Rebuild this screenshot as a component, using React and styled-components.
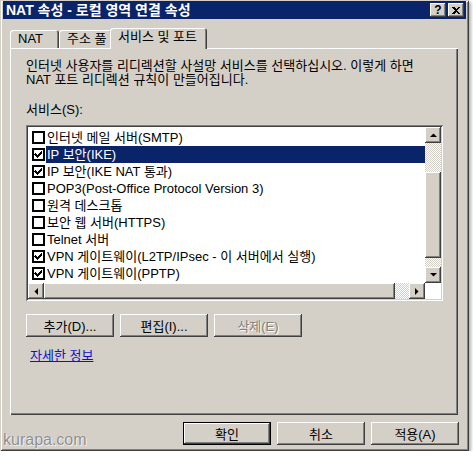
import React from 'react';
import styled, { createGlobalStyle } from 'styled-components';

const FACE = '#d4d0c8';
const NAVY = '#0a246a';

const GlobalStyle = createGlobalStyle`
  html, body {
    margin: 0;
    padding: 0;
    background: #fff;
  }
  body {
    font-family: "Liberation Sans", "Noto Sans CJK KR", sans-serif;
    font-size: 13px;
    color: #000;
  }
`;

const raised = `
  box-shadow: inset -1px -1px #404040, inset 1px 1px #fff,
    inset -2px -2px #808080, inset 2px 2px ${FACE};
`;

const Window = styled.div`
  position: relative;
  box-sizing: border-box;
  width: 469px;
  height: 451px;
  padding: 1px 3px 3px 3px;
  background: ${FACE};
  display: flex;
  flex-direction: column;
  box-shadow: inset 1px 1px ${FACE}, inset -1px -1px #404040,
    inset 2px 2px #fff, inset -2px -2px #808080,
    2px 2px 3px rgba(0, 0, 0, 0.3);
`;

const TitleBar = styled.div`
  height: 18px;
  background: ${NAVY};
  display: flex;
  align-items: center;
  padding: 0 2px 0 3px;
`;

const Title = styled.span`
  flex: 1;
  color: #fff;
  font-weight: bold;
  font-size: 14px;
  line-height: 18px;
  white-space: nowrap;
`;

const TitleButton = styled.div`
  width: 16px;
  height: 14px;
  margin-left: 2px;
  background: ${FACE};
  ${raised}
  display: flex;
  align-items: center;
  justify-content: center;
  font-weight: bold;
  font-size: 12px;
  line-height: 14px;
`;

const Client = styled.div`
  flex: 1;
  display: flex;
  flex-direction: column;
  padding: 9px 7px 0 7px;
`;

const TabStrip = styled.div`
  display: flex;
  align-items: flex-end;
  height: 20px;
`;

const Tab = styled.div`
  position: relative;
  box-sizing: border-box;
  width: ${({ $w }) => $w}px;
  height: ${({ $active }) => ($active ? 21 : 18)}px;
  margin-left: ${({ $active }) => ($active ? -2 : 0)}px;
  margin-bottom: ${({ $active }) => ($active ? -1 : 0)}px;
  z-index: ${({ $active }) => ($active ? 1 : 0)};
  padding: 0 0 ${({ $active }) => ($active ? 3 : 0)}px 8px;
  display: flex;
  align-items: center;
  background: ${FACE};
  border-radius: 3px 3px 0 0;
  box-shadow: inset 1px 1px #fff, inset -1px 0 #404040, inset -2px 0 #808080;
  white-space: nowrap;
  line-height: 14px;
`;

const Panel = styled.div`
  box-sizing: border-box;
  width: 448px;
  height: 367px;
  padding: 11px 0 0 16px;
  display: flex;
  flex-direction: column;
  background: ${FACE};
  box-shadow: inset 1px 1px #fff, inset -1px -1px #404040, inset -2px -2px #808080;
`;

const Description = styled.p`
  margin: 0;
  line-height: 14px;
  white-space: nowrap;
`;

const Label = styled.div`
  margin-top: 16px;
  line-height: 14px;
`;

const ListBox = styled.div`
  box-sizing: border-box;
  margin-top: 8px;
  width: 417px;
  height: 176px;
  padding: 2px;
  background: #fff;
  display: grid;
  grid-template-columns: 1fr 16px;
  grid-template-rows: 1fr 16px;
  box-shadow: inset 1px 1px #808080, inset -1px -1px #fff,
    inset 2px 2px #404040, inset -2px -2px ${FACE};
`;

const Items = styled.div`
  padding-top: 2px;
  overflow: hidden;
`;

const Row = styled.div`
  height: 17px;
  display: flex;
  align-items: center;
`;

const Check = styled.div`
  box-sizing: border-box;
  width: 13px;
  height: 13px;
  margin: 0 1px 0 4px;
  border: 2px solid #000;
  background: #fff;
  display: flex;
  align-items: center;
  justify-content: center;
`;

const ItemText = styled.div`
  flex: 1;
  height: 17px;
  padding-left: 1px;
  line-height: 17px;
  white-space: nowrap;
  overflow: hidden;
  background: ${({ $selected }) => ($selected ? NAVY : 'transparent')};
  color: ${({ $selected }) => ($selected ? '#fff' : '#000')};
`;

const VScroll = styled.div`
  display: flex;
  flex-direction: column;
`;

const HScroll = styled.div`
  display: flex;
`;

const Corner = styled.div`
  background: #fff;
`;

const Track = styled.div`
  flex: 1;
  display: flex;
  flex-direction: ${({ $vertical }) => ($vertical ? 'column' : 'row')};
  background-color: #fff;
  background-image: conic-gradient(#fff 25%, ${FACE} 0 50%, #fff 0 75%, ${FACE} 0);
  background-size: 2px 2px;
`;

const Thumb = styled.div`
  background: ${FACE};
  ${raised}
`;

const ArrowButton = styled.div`
  width: 16px;
  height: 16px;
  flex: none;
  background: ${FACE};
  ${raised}
  display: flex;
  align-items: center;
  justify-content: center;
`;

const ButtonRow = styled.div`
  display: flex;
  gap: 6px;
  margin-top: 13px;
`;

const Button = styled.div`
  box-sizing: border-box;
  width: 88px;
  height: 23px;
  display: flex;
  align-items: center;
  justify-content: center;
  background: ${FACE};
  white-space: nowrap;
  color: ${({ $disabled }) => ($disabled ? '#808080' : '#000')};
  text-shadow: ${({ $disabled }) => ($disabled ? '1px 1px #fff' : 'none')};
  box-shadow: ${({ $default }) =>
    $default
      ? `inset 0 0 0 1px #000, inset -2px -2px #404040, inset 2px 2px #fff, inset -3px -3px #808080`
      : `inset -1px -1px #404040, inset 1px 1px #fff, inset -2px -2px #808080, inset 2px 2px ${FACE}`};
`;

const Link = styled.a`
  align-self: flex-start;
  margin: 12px 0 0 4px;
  line-height: 14px;
  color: #1010c8;
  text-decoration: underline;
  cursor: pointer;
`;

const Footer = styled.div`
  display: flex;
  justify-content: flex-end;
  gap: 6px;
  margin-top: 7px;
`;

const Watermark = styled.div`
  position: absolute;
  left: 3px;
  top: 432px;
  font-family: "Liberation Sans", sans-serif;
  font-size: 16px;
  line-height: 16px;
  color: #8c8c8c;
  text-shadow: 0 0 1px #fff, 1px 1px 0 #eee;
`;

const services = [
  { label: '인터넷 메일 서버(SMTP)', checked: false },
  { label: 'IP 보안(IKE)', checked: true, selected: true },
  { label: 'IP 보안(IKE NAT 통과)', checked: true },
  { label: 'POP3(Post-Office Protocol Version 3)', checked: false },
  { label: '원격 데스크톱', checked: false },
  { label: '보안 웹 서버(HTTPS)', checked: false },
  { label: 'Telnet 서버', checked: false },
  { label: 'VPN 게이트웨이(L2TP/IPsec - 이 서버에서 실행)', checked: true },
  { label: 'VPN 게이트웨이(PPTP)', checked: true },
];

const CheckMark = () => (
  <svg width="9" height="9" viewBox="0 0 9 9" shapeRendering="crispEdges">
    <path d="M1 3h1v1h1v1h1v-1h1v-1h1v-1h1v-1h1v3h-1v1h-1v1h-1v1h-1v1h-1v-1h-1v-1h-1v-1h-1z" fill="#000" />
  </svg>
);

const Arrow = ({ dir }) => {
  const pts = {
    up: '0,4 7,4 3.5,0.5',
    down: '0,0 7,0 3.5,3.5',
    left: '4,0 4,7 0.5,3.5',
    right: '0,0 0,7 3.5,3.5',
  }[dir];
  const vertical = dir === 'up' || dir === 'down';
  return (
    <svg width={vertical ? 7 : 4} height={vertical ? 4 : 7} viewBox={vertical ? '0 0 7 4' : '0 0 4 7'}>
      <polygon points={pts} fill="#000" />
    </svg>
  );
};

const CloseGlyph = () => (
  <svg width="8" height="7" viewBox="0 0 8 7" shapeRendering="crispEdges">
    <path d="M0 0h2l2 2l2-2h2l-3 3.5l3 3.5h-2l-2-2l-2 2h-2l3-3.5z" fill="#000" />
  </svg>
);

export default function App() {
  return (
    <>
      <GlobalStyle />
      <Window>
        <TitleBar>
          <Title>NAT 속성 - 로컬 영역 연결 속성</Title>
          <TitleButton>?</TitleButton>
          <TitleButton>
            <CloseGlyph />
          </TitleButton>
        </TitleBar>
        <Client>
          <TabStrip>
            <Tab $w={49}>NAT</Tab>
            <Tab $w={53}>주소 풀</Tab>
            <Tab $w={97} $active>서비스 및 포트</Tab>
          </TabStrip>
          <Panel>
            <Description>
              인터넷 사용자를 리디렉션할 사설망 서비스를 선택하십시오. 이렇게 하면
              <br />
              NAT 포트 리디렉션 규칙이 만들어집니다.
            </Description>
            <Label>서비스(S):</Label>
            <ListBox>
              <Items>
                {services.map((s) => (
                  <Row key={s.label}>
                    <Check>{s.checked && <CheckMark />}</Check>
                    <ItemText $selected={s.selected}>{s.label}</ItemText>
                  </Row>
                ))}
              </Items>
              <VScroll>
                <ArrowButton>
                  <Arrow dir="up" />
                </ArrowButton>
                <Track $vertical>
                  <Thumb style={{ marginTop: 29, height: 86 }} />
                </Track>
                <ArrowButton>
                  <Arrow dir="down" />
                </ArrowButton>
              </VScroll>
              <HScroll>
                <ArrowButton>
                  <Arrow dir="left" />
                </ArrowButton>
                <Track>
                  <Thumb style={{ width: 351 }} />
                </Track>
                <ArrowButton>
                  <Arrow dir="right" />
                </ArrowButton>
              </HScroll>
              <Corner />
            </ListBox>
            <ButtonRow>
              <Button>추가(D)...</Button>
              <Button>편집(I)...</Button>
              <Button $disabled>삭제(E)</Button>
            </ButtonRow>
            <Link>자세한 정보</Link>
          </Panel>
          <Footer>
            <Button $default>확인</Button>
            <Button>취소</Button>
            <Button>적용(A)</Button>
          </Footer>
        </Client>
        <Watermark>kurapa.com</Watermark>
      </Window>
    </>
  );
}
